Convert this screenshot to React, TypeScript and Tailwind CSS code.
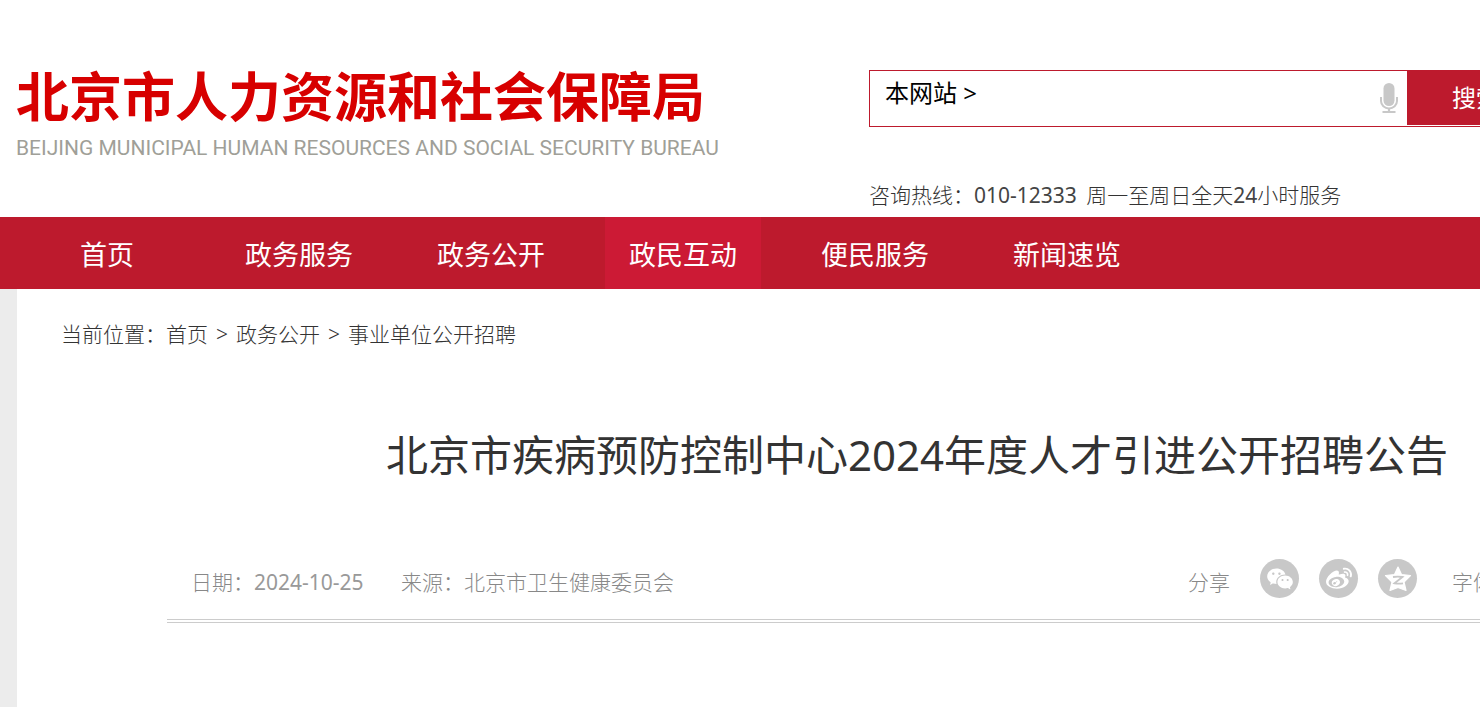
import { RiWechatFill } from "react-icons/ri";
import { FaWeibo } from "react-icons/fa";

const navItems = ["首页", "政务服务", "政务公开", "政民互动", "便民服务", "新闻速览"];
const activeItem = "政民互动";

function MicIcon() {
  return (
    <svg viewBox="0 0 18 30" className="h-[30px] w-[18px]" aria-hidden="true">
      <rect x="3.500" y="0" width="11" height="23" rx="5.500" fill="#c8c8c8" />
      <path d="M1 14v4a8 7.500 0 0 0 16 0V14" fill="none" stroke="#c8c8c8" strokeWidth="2" />
      <path d="M9 25v4M2.500 29h13" fill="none" stroke="#c8c8c8" strokeWidth="2.200" />
    </svg>
  );
}

function QzoneIcon() {
  return (
    <svg viewBox="0 0 28 28" className="h-7 w-7" aria-hidden="true">
      <path
        d="M14 2l3.500 7.500 9 1-6.500 6.500 2 8.500L14 22.500 6 25.500l2-8.500-6.500-6.500 9-1z"
        fill="white"
        stroke="white"
        strokeWidth="1.200"
        strokeLinejoin="round"
      />
      <path
        d="M9 12q5-.9 9.500 0l-8 6.300q4.500.8 8.500 0"
        fill="none"
        stroke="#c8c8c8"
        strokeWidth="1.800"
      />
    </svg>
  );
}

const shareLinks = [
  { label: "微信", icon: <RiWechatFill className="h-7 w-7" /> },
  { label: "微博", icon: <FaWeibo className="h-[26px] w-[26px]" /> },
  { label: "QQ空间", icon: <QzoneIcon /> },
];

function Header() {
  return (
    <header className="flex h-[217px] pl-4 pt-[70px]">
      <a href="#" className="block w-[853px] shrink-0 whitespace-nowrap">
        <span className="block text-[53px] leading-[54px] font-bold text-[#d70000]">
          北京市人力资源和社会保障局
        </span>
        <span className="mt-3 block font-['Roboto'] text-[21px] leading-6 text-[#a09f98]">
          BEIJING MUNICIPAL HUMAN RESOURCES AND SOCIAL SECURITY BUREAU
        </span>
      </a>
      <div>
        <form
          className="flex h-[57px] w-[677px] items-start border border-[#bd1a2d]"
          onSubmit={(e) => e.preventDefault()}
        >
          <label htmlFor="keyword" className="pl-[15px] text-2xl leading-[44px] text-black">
            本网站 &gt;
          </label>
          <input id="keyword" type="text" className="h-full min-w-0 flex-1 px-3 text-2xl outline-none" />
          <button type="button" aria-label="语音输入" className="mr-[9px] flex h-[54px] items-center">
            <MicIcon />
          </button>
          <button type="submit" className="h-[54px] w-[138px] bg-[#bd1a2d] text-2xl text-white">
            搜索
          </button>
        </form>
        <p className="mt-[53px] text-[21px] leading-[30px] font-light text-[#333]">
          咨询热线：<span className="mr-1 font-normal text-[#444]">010-12333</span> 周一至周日全天
          <span className="font-normal text-[#444]">24</span>小时服务
        </p>
      </div>
    </header>
  );
}

function Nav() {
  return (
    <nav className="flex h-[72px] gap-9 bg-[#bd1a2d] pl-[29px]">
      {navItems.map((item) => (
        <a
          key={item}
          href="#"
          className={`w-[156px] text-center text-[27px] leading-[76px] text-white ${
            item === activeItem ? "bg-[#cc1a35]" : ""
          }`}
        >
          {item}
        </a>
      ))}
    </nav>
  );
}

function Article() {
  return (
    <article className="mx-auto w-[1500px] pt-[76px]">
      <h1 className="text-center text-[42px] leading-[60px] text-[#333]">
        北京市疾病预防控制中心2024年度人才引进公开招聘公告
      </h1>
      <div className="mt-[74px] flex h-16 items-start border-b-4 border-double border-[#ccc] px-6 text-[21px] leading-[46px] font-light text-[#888]">
        <span className="w-[210px]">
          日期：<time className="font-normal text-[#999]">2024-10-25</time>
        </span>
        <span>来源：北京市卫生健康委员会</span>
        <div className="ml-auto flex">
          <span>分享</span>
          <div className="ml-[30px] flex gap-5">
            {shareLinks.map((link) => (
              <a
                key={link.label}
                href="#"
                aria-label={link.label}
                className="flex h-[39px] w-[39px] items-center justify-center rounded-full bg-[#c8c8c8] text-white"
              >
                {link.icon}
              </a>
            ))}
          </div>
          <span className="ml-[35px] w-[191px]">字体：大 中 小</span>
        </div>
      </div>
    </article>
  );
}

export default function App() {
  return (
    <div className="min-h-screen overflow-x-hidden bg-white font-['Noto_Sans','Noto_Sans_CJK_SC',sans-serif]">
      <div className="flex min-h-screen min-w-[1834px] flex-col">
        <Header />
        <Nav />
        <div className="flex grow flex-col bg-[#ececec] px-[17px]">
          <main className="grow bg-white">
            <p className="pl-11 pt-[30px] text-[21px] leading-[30px] font-light text-[#333]">
              当前位置：<a href="#">首页</a>
              <span className="mx-2">&gt;</span>
              <a href="#">政务公开</a>
              <span className="mx-2">&gt;</span>
              <a href="#">事业单位公开招聘</a>
            </p>
            <Article />
          </main>
        </div>
      </div>
    </div>
  );
}
